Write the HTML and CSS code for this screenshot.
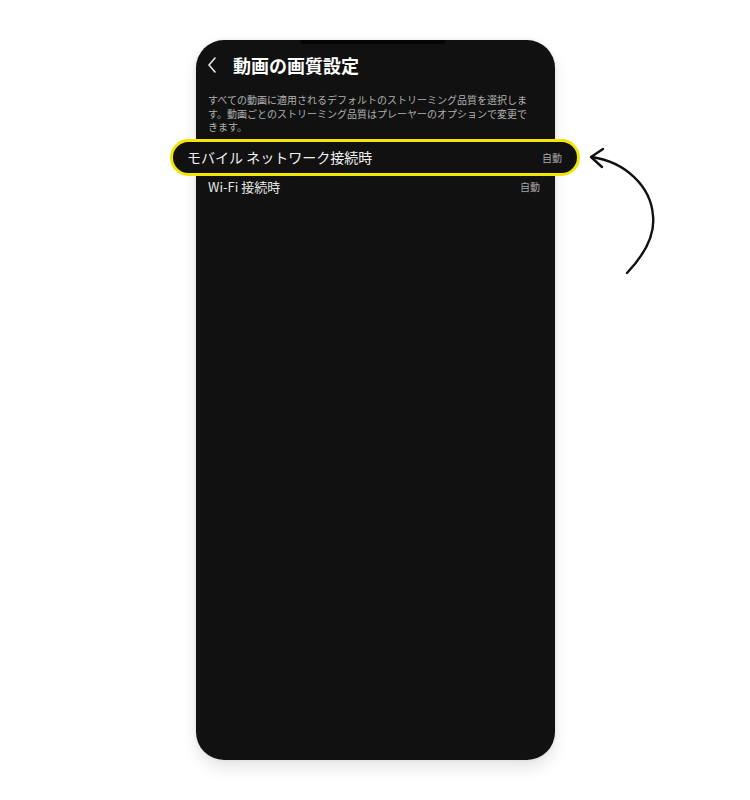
FILE: index.html
```html
<!DOCTYPE html>
<html lang="ja">
<head>
<meta charset="utf-8">
<link rel="stylesheet" href="styles.css">
</head>
<body>
<div class="stage">
  <div class="phone">
    <div class="notch"></div>
    <div class="header">
      <svg class="back" width="10" height="16" viewBox="0 0 10 16"><path d="M8 1 L2 8 L8 15" fill="none" stroke="#e8e8e8" stroke-width="1.6" stroke-linecap="round" stroke-linejoin="round"/></svg>
      <h1 class="title">動画の画質設定</h1>
    </div>
    <p class="desc">すべての動画に適用されるデフォルトのストリーミング品質を選択します。動画ごとのストリーミング品質はプレーヤーのオプションで変更できます。</p>
    <div class="row highlight">
      <span class="label big">モバイル ネットワーク接続時</span>
      <span class="value">自動</span>
    </div>
    <div class="row">
      <span class="label">Wi-Fi 接続時</span>
      <span class="value">自動</span>
    </div>
  </div>
  <svg class="arrow" width="80" height="140" viewBox="0 0 80 140">
    <path d="M46 131 C64 112 74 92 72 74 C70 44 44 20 11 15" fill="none" stroke="#111" stroke-width="2.4" stroke-linecap="round"/>
    <path d="M22 7 L10 15 L21 25" fill="none" stroke="#111" stroke-width="2.4" stroke-linecap="round" stroke-linejoin="round"/>
  </svg>
</div>
</body>
</html>
```
FILE: styles.css
```css
html, body {
  margin: 0;
  padding: 0;
  background: #ffffff;
}
body {
  font-family: "Noto Sans CJK JP", "Noto Sans", sans-serif;
}
.stage {
  position: relative;
  width: 750px;
  height: 800px;
  padding-top: 40px;
  box-sizing: border-box;
}
.phone {
  position: relative;
  margin-left: 196px;
  width: 359px;
  height: 720px;
  background: #111111;
  border-radius: 28px;
  box-shadow: 0 8px 16px rgba(0,0,0,0.10), 0 0 4px rgba(0,0,0,0.08);
}
.notch {
  position: absolute;
  left: 104px;
  top: 0;
  width: 146px;
  height: 4px;
  background: #060606;
  border-radius: 0 0 6px 6px;
}
.header {
  display: flex;
  align-items: center;
  height: 50px;
  padding-left: 11px;
}
.back {
  display: block;
}
.title {
  margin: 0 0 0 16px;
  font-size: 18px;
  font-weight: 700;
  color: #ffffff;
  line-height: 1;
}
.desc {
  margin: 3px 0 0 0;
  padding: 0 24px 0 12px;
  font-size: 10px;
  line-height: 13.5px;
  color: #b0b0b0;
}
.row {
  display: flex;
  justify-content: space-between;
  align-items: center;
  height: 22px;
  padding: 0 15px 0 12px;
}
.row.highlight {
  margin: 5px -25px 0 -26px;
  height: 37px;
  box-sizing: border-box;
  border: 3px solid #f2e500;
  border-radius: 19px;
  background: #111111;
  padding: 0 15px 0 14px;
}
.label {
  font-size: 13px;
  color: #e6e6e6;
}
.label.big {
  font-size: 14px;
  color: #f0f0f0;
}
.value {
  font-size: 10px;
  color: #a8a8a8;
}
.arrow {
  position: absolute;
  left: 581px;
  top: 142px;
}
```
